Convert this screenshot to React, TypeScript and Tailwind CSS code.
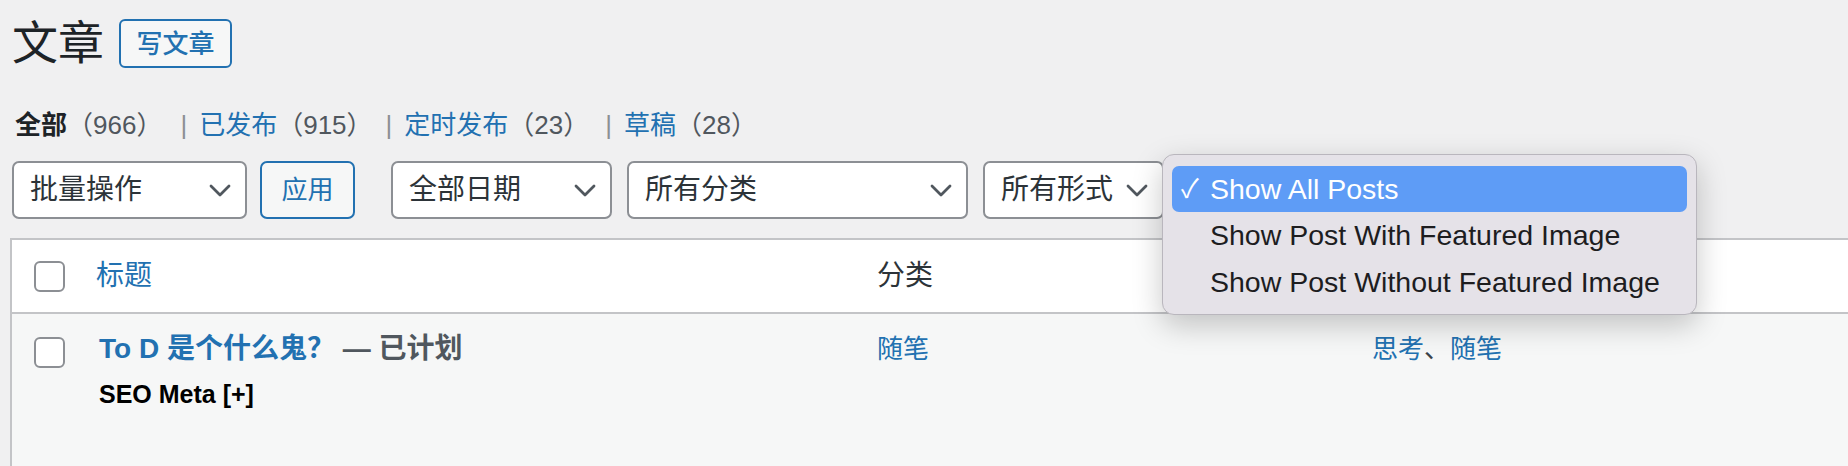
import React from "react";

const FONT = '"Liberation Sans", "Noto Sans CJK SC", sans-serif';

function Chevron() {
  return (
    <svg width="22" height="13" viewBox="0 0 22 13" className="shrink-0">
      <polyline points="2,2 11,11 20,2" fill="none" stroke="#50575e" strokeWidth="2.8" strokeLinecap="round" strokeLinejoin="round" />
    </svg>
  );
}

function Select({ label, w, ml }: { label: string; w: string; ml: string }) {
  return (
    <div className={`${w} ${ml} h-[58px] flex items-center justify-between border-2 border-[#8c8f94] rounded-[7px] bg-white pl-[16px] pr-[14px] text-[28px] text-[#2c3338]`}>
      <span className="leading-none">{label}</span>
      <Chevron />
    </div>
  );
}

function Checkbox() {
  return <div className="w-[31px] h-[31px] rounded-[6px] border-2 border-[#8c8f94] bg-white" />;
}

export default function App() {
  return (
    <div className="relative w-[1848px] h-[466px] overflow-hidden bg-[#f0f0f1]" style={{ fontFamily: FONT }}>
      {/* Title row */}
      <div className="pl-[12px] pt-[19px] flex items-center h-[68px]">
        <h1 className="text-[46px] leading-[49px] text-[#1d2327] font-normal">文章</h1>
        <button className="ml-[15px] h-[49px] w-[113px] border-2 border-[#2271b1] rounded-[6px] bg-[#f6f7f7] text-[#2271b1] text-[26px] font-medium leading-none">
          写文章
        </button>
      </div>

      {/* Status line */}
      <div className="pl-[15px] mt-[40px] h-[34px] flex items-center text-[26px] leading-[34px] text-[#50575e] whitespace-pre">
        <span className="font-bold text-[#1d2327]">全部</span>
        <span>（966）</span>
        <span className="ml-[18px] mr-[12px] text-[#8c8f94]">|</span>
        <span className="text-[#2271b1]">已发布</span>
        <span>（915）</span>
        <span className="ml-[13px] mr-[12px] text-[#8c8f94]">|</span>
        <span className="text-[#2271b1]">定时发布</span>
        <span>（23）</span>
        <span className="ml-[16px] mr-[12px] text-[#8c8f94]">|</span>
        <span className="text-[#2271b1]">草稿</span>
        <span>（28）</span>
      </div>

      {/* Filters */}
      <div className="pl-[12px] mt-[19px] flex items-center">
        <Select label="批量操作" w="w-[235px]" ml="ml-0" />
        <button className="ml-[13px] w-[95px] h-[58px] border-2 border-[#2271b1] rounded-[7px] bg-[#f6f7f7] text-[#2271b1] text-[26px] leading-none">
          应用
        </button>
        <Select label="全部日期" w="w-[221px]" ml="ml-[36px]" />
        <Select label="所有分类" w="w-[341px]" ml="ml-[15px]" />
        <Select label="所有形式" w="w-[181px]" ml="ml-[15px]" />
      </div>

      {/* Table */}
      <div className="ml-[10px] mt-[19px] border-l-2 border-t-2 border-[#c3c4c7]">
        <div className="h-[74px] bg-white border-b-2 border-[#c3c4c7] grid grid-cols-[84px_781px_495px_1fr] items-center text-[28px] leading-[36px]">
          <div className="pl-[22px] flex"><Checkbox /></div>
          <div className="text-[#2271b1]">标题</div>
          <div className="text-[#2c3338]">分类</div>
          <div />
        </div>
        <div className="h-[160px] bg-[#f6f7f7] grid grid-cols-[84px_781px_495px_1fr] items-start">
          <div className="pl-[22px] pt-[23px] flex"><Checkbox /></div>
          <div className="pt-[17px]">
            <div className="text-[28px] leading-[36px] font-bold whitespace-pre">
              <span className="text-[#2271b1] ml-[3px]">To D 是个什么鬼？</span>
              <span className="text-[#50575e]"> — 已计划</span>
            </div>
            <div className="mt-[11px] ml-[3px] text-[25px] leading-[32px] font-bold text-black">SEO Meta [+]</div>
          </div>
          <div className="pt-[17px] text-[26px] leading-[36px] text-[#2271b1]">随笔</div>
          <div className="pt-[17px] text-[26px] leading-[36px]">
            <span className="text-[#2271b1]">思考</span>
            <span className="text-[#3c434a]">、</span>
            <span className="text-[#2271b1]">随笔</span>
          </div>
        </div>
      </div>

      {/* Dropdown popup */}
      <div className="absolute left-[1162px] top-[154px] w-[535px] h-[161px] rounded-[12px] border border-[#b9b6bd] bg-[#e5e2e8] shadow-[0_10px_30px_rgba(0,0,0,0.22)] pt-[11px] px-[9px]">
        <div className="h-[46px] rounded-[7px] bg-[#5e9cf6] flex items-center text-white text-[28.5px]">
          <span className="w-[38px] pl-[9px] text-[26px]">✓</span>
          <span>Show All Posts</span>
        </div>
        <div className="h-[47px] flex items-center text-[#1d1d1f] text-[28.5px] pl-[38px]">Show Post With Featured Image</div>
        <div className="h-[47px] flex items-center text-[#1d1d1f] text-[28.5px] pl-[38px]">Show Post Without Featured Image</div>
      </div>
    </div>
  );
}
